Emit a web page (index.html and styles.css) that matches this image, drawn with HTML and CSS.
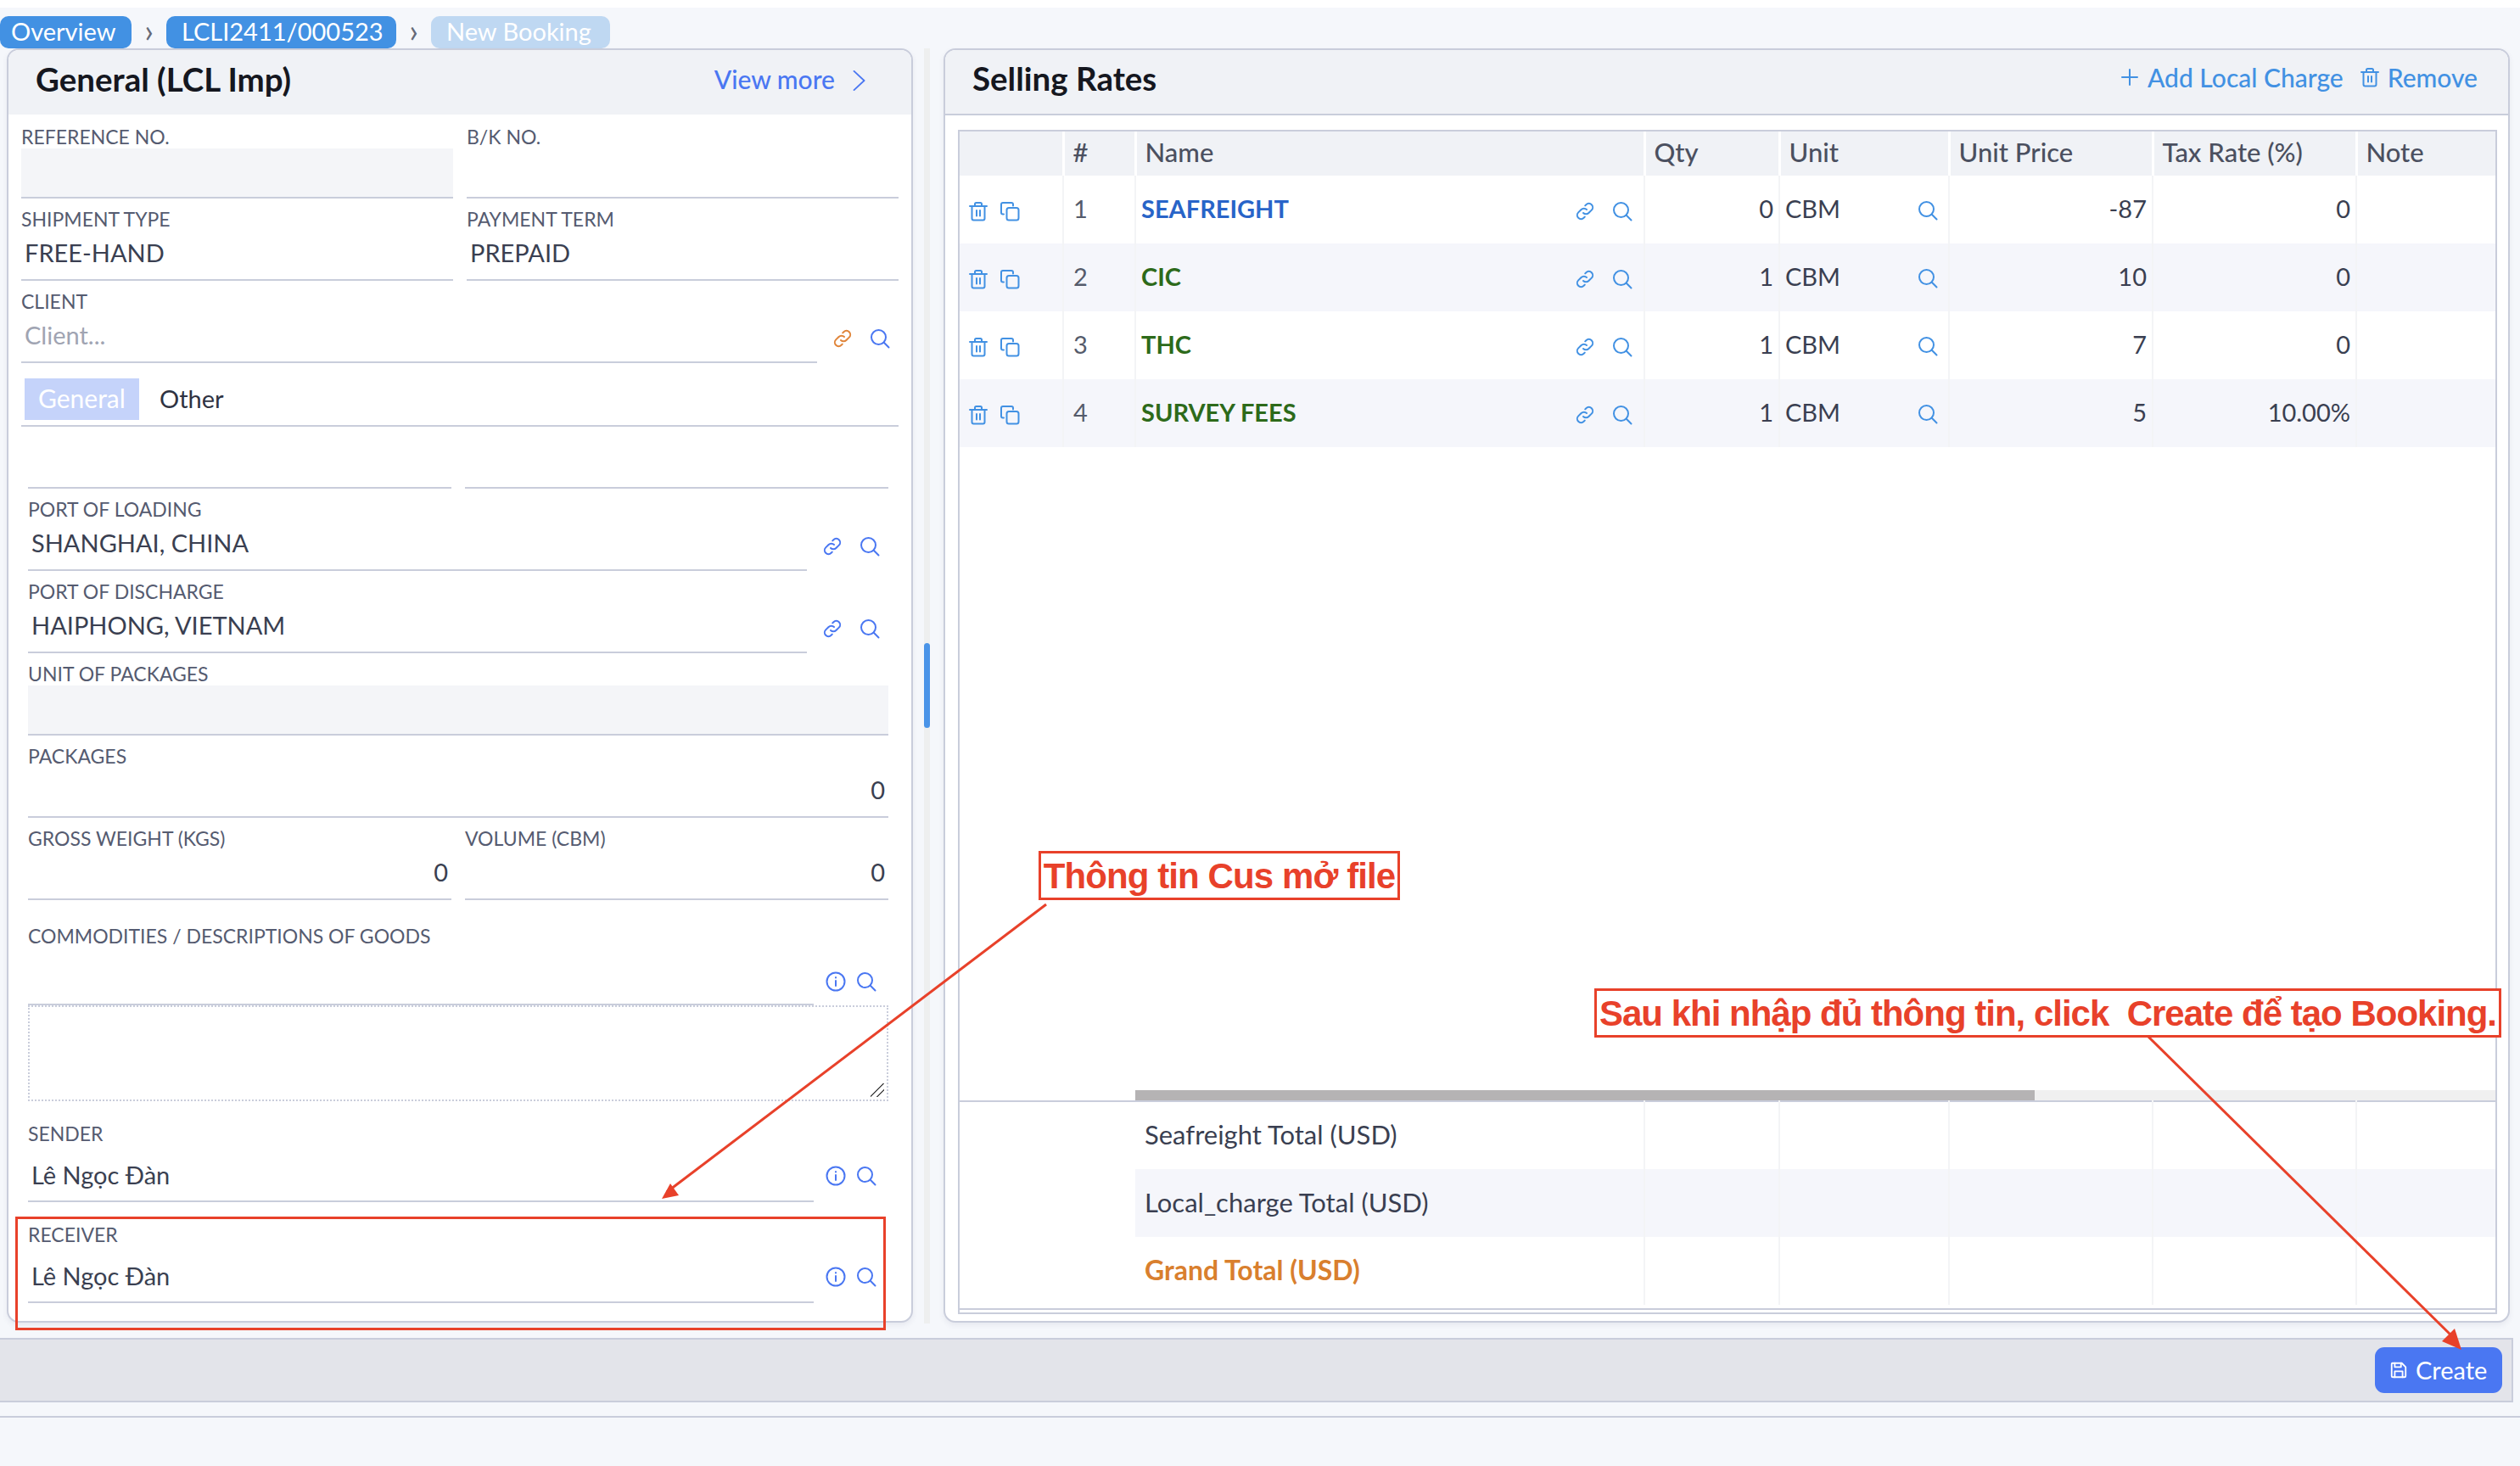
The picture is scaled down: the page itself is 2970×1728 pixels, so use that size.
FILE: index.html
```html
<!DOCTYPE html>
<html lang="en">
<head>
    <meta charset="UTF-8">
    <meta name="viewport" content="width=device-width, initial-scale=1.0">
    <title>New Booking</title>
    <link rel="stylesheet" href="styles.css">
</head>
<body>
    <svg class="icon-defs" width="0" height="0">
        <symbol id="i-search" viewBox="0 0 24 24"><circle cx="10.5" cy="10.5" r="8.5"/><path d="M16.8 16.8L22.5 22.5"/></symbol>
        <symbol id="i-link" viewBox="0 0 24 24"><path d="M10 14a4.5 4.5 0 0 0 6.4 0l3.4-3.4a4.5 4.5 0 0 0-6.4-6.4l-1.2 1.2"/><path d="M14 10a4.5 4.5 0 0 0-6.4 0l-3.4 3.4a4.5 4.5 0 0 0 6.4 6.4l1.2-1.2"/></symbol>
        <symbol id="i-info" viewBox="0 0 24 24"><circle cx="12" cy="12" r="10.5"/><path d="M12 11v6M12 7v.5"/></symbol>
        <symbol id="i-trash" viewBox="0 0 24 24"><path d="M2 6h20M8 6V3.500A1.500 1.500 0 0 1 9.500 2h5A1.500 1.500 0 0 1 16 3.500V6M4.500 6v14.500A2 2 0 0 0 6.500 22.500h11a2 2 0 0 0 2-2V6M10 11v6.500M14 11v6.500"/></symbol>
        <symbol id="i-copy" viewBox="0 0 24 24"><path d="M5 15.500H4a2 2 0 0 1-2-2V4a2 2 0 0 1 2-2h10a2 2 0 0 1 2 2v1.500"/><rect x="8.500" y="8" width="14" height="14.500" rx="2.500"/></symbol>
        <symbol id="i-plus" viewBox="0 0 24 24"><path d="M12 3v18M3 12h18"/></symbol>
        <symbol id="i-save" viewBox="0 0 24 24"><path d="M4 3h12l5 5v11.500a1.500 1.500 0 0 1-1.500 1.500h-15A1.500 1.500 0 0 1 3 19.500V4a1 1 0 0 1 1-1z"/><path d="M7 21v-7.500h10V21M7 3v5h8V3"/></symbol>
    </svg>

    <div class="top-strip"></div>

    <nav class="crumbs">
        <a class="crumb crumb-first">Overview</a>
        <span class="crumb-sep">&rsaquo;</span>
        <a class="crumb crumb-second">LCLI2411/000523</a>
        <span class="crumb-sep">&rsaquo;</span>
        <a class="crumb crumb-current">New Booking</a>
    </nav>

    <main class="content">
        <section class="card card-general">
            <header class="card-head">
                <h2>General (LCL Imp)</h2>
                <a class="view-more">View more <svg class="ico chevron" viewBox="0 0 26 26"><path d="M6 1L19 13L6 25"/></svg></a>
            </header>
            <div class="card-body">
                <div class="two-col">
                    <div class="field">
                        <label>REFERENCE NO.</label>
                        <div class="control is-disabled"></div>
                    </div>
                    <div class="field">
                        <label>B/K NO.</label>
                        <div class="control"></div>
                    </div>
                    <div class="field">
                        <label>SHIPMENT TYPE</label>
                        <div class="control">FREE-HAND</div>
                    </div>
                    <div class="field">
                        <label>PAYMENT TERM</label>
                        <div class="control">PREPAID</div>
                    </div>
                </div>
                <div class="field">
                    <label>CLIENT</label>
                    <div class="with-icons client-row">
                        <div class="control placeholder">Client...</div>
                        <svg class="ico ico-orange"><use href="#i-link"/></svg>
                        <svg class="ico"><use href="#i-search"/></svg>
                    </div>
                </div>

                <div class="tabs">
                    <span class="tab tab-active">General</span>
                    <span class="tab">Other</span>
                </div>

                <div class="tab-pane">
                    <div class="two-col clipped">
                        <div class="clip-line"></div>
                        <div class="clip-line"></div>
                    </div>
                    <div class="field">
                        <label>PORT OF LOADING</label>
                        <div class="with-icons port-row">
                            <div class="control">SHANGHAI, CHINA</div>
                            <svg class="ico"><use href="#i-link"/></svg>
                            <svg class="ico"><use href="#i-search"/></svg>
                        </div>
                    </div>
                    <div class="field">
                        <label>PORT OF DISCHARGE</label>
                        <div class="with-icons port-row">
                            <div class="control">HAIPHONG, VIETNAM</div>
                            <svg class="ico"><use href="#i-link"/></svg>
                            <svg class="ico"><use href="#i-search"/></svg>
                        </div>
                    </div>
                    <div class="field">
                        <label>UNIT OF PACKAGES</label>
                        <div class="control is-disabled"></div>
                    </div>
                    <div class="field">
                        <label>PACKAGES</label>
                        <div class="control is-number">0</div>
                    </div>
                    <div class="two-col">
                        <div class="field">
                            <label>GROSS WEIGHT (KGS)</label>
                            <div class="control is-number">0</div>
                        </div>
                        <div class="field">
                            <label>VOLUME (CBM)</label>
                            <div class="control is-number">0</div>
                        </div>
                    </div>

                    <div class="field commodity">
                        <label>COMMODITIES / DESCRIPTIONS OF GOODS</label>
                        <div class="with-icons party-row commodity-row">
                            <div class="control"></div>
                            <svg class="ico"><use href="#i-info"/></svg>
                            <svg class="ico"><use href="#i-search"/></svg>
                        </div>
                    </div>
                    <div class="text-area"><span class="resize-grip"></span></div>

                    <div class="field party">
                        <label>SENDER</label>
                        <div class="with-icons party-row">
                            <div class="control">Lê Ngọc Đàn</div>
                            <svg class="ico"><use href="#i-info"/></svg>
                            <svg class="ico"><use href="#i-search"/></svg>
                        </div>
                    </div>
                    <div class="field party">
                        <label>RECEIVER</label>
                        <div class="with-icons party-row">
                            <div class="control">Lê Ngọc Đàn</div>
                            <svg class="ico"><use href="#i-info"/></svg>
                            <svg class="ico"><use href="#i-search"/></svg>
                        </div>
                    </div>
                </div>
            </div>
        </section>

        <div class="page-scroll"><div class="page-thumb"></div></div>

        <section class="card card-rates">
            <header class="card-head">
                <h2>Selling Rates</h2>
                <div class="head-actions">
                    <a><svg class="ico ico-sky ico-plus"><use href="#i-plus"/></svg>Add Local Charge</a>
                    <a><svg class="ico ico-sky"><use href="#i-trash"/></svg>Remove</a>
                </div>
            </header>
            <div class="rates-body">
                <div class="grid-box">
                    <div class="grid-scroll">
                        <table class="grid">
                            <colgroup>
                                <col class="c-act"><col class="c-no"><col class="c-name"><col class="c-qty"><col class="c-unit"><col class="c-price"><col class="c-tax"><col>
                            </colgroup>
                            <thead>
                                <tr><th></th><th>#</th><th>Name</th><th>Qty</th><th>Unit</th><th>Unit Price</th><th>Tax Rate (%)</th><th>Note</th></tr>
                            </thead>
                            <tbody>
                                <tr>
                                    <td><div class="row-actions"><svg class="ico ico-sky"><use href="#i-trash"/></svg><svg class="ico ico-sky"><use href="#i-copy"/></svg></div></td>
                                    <td class="no">1</td>
                                    <td><div class="name-cell"><b class="charge-blue">SEAFREIGHT</b><svg class="ico ico-sky"><use href="#i-link"/></svg><svg class="ico ico-sky"><use href="#i-search"/></svg></div></td>
                                    <td class="num">0</td>
                                    <td><div class="unit-cell">CBM<svg class="ico ico-sky"><use href="#i-search"/></svg></div></td>
                                    <td class="num">-87</td>
                                    <td class="num">0</td>
                                    <td></td>
                                </tr>
                                <tr>
                                    <td><div class="row-actions"><svg class="ico ico-sky"><use href="#i-trash"/></svg><svg class="ico ico-sky"><use href="#i-copy"/></svg></div></td>
                                    <td class="no">2</td>
                                    <td><div class="name-cell"><b class="charge-green">CIC</b><svg class="ico ico-sky"><use href="#i-link"/></svg><svg class="ico ico-sky"><use href="#i-search"/></svg></div></td>
                                    <td class="num">1</td>
                                    <td><div class="unit-cell">CBM<svg class="ico ico-sky"><use href="#i-search"/></svg></div></td>
                                    <td class="num">10</td>
                                    <td class="num">0</td>
                                    <td></td>
                                </tr>
                                <tr>
                                    <td><div class="row-actions"><svg class="ico ico-sky"><use href="#i-trash"/></svg><svg class="ico ico-sky"><use href="#i-copy"/></svg></div></td>
                                    <td class="no">3</td>
                                    <td><div class="name-cell"><b class="charge-green">THC</b><svg class="ico ico-sky"><use href="#i-link"/></svg><svg class="ico ico-sky"><use href="#i-search"/></svg></div></td>
                                    <td class="num">1</td>
                                    <td><div class="unit-cell">CBM<svg class="ico ico-sky"><use href="#i-search"/></svg></div></td>
                                    <td class="num">7</td>
                                    <td class="num">0</td>
                                    <td></td>
                                </tr>
                                <tr>
                                    <td><div class="row-actions"><svg class="ico ico-sky"><use href="#i-trash"/></svg><svg class="ico ico-sky"><use href="#i-copy"/></svg></div></td>
                                    <td class="no">4</td>
                                    <td><div class="name-cell"><b class="charge-green">SURVEY FEES</b><svg class="ico ico-sky"><use href="#i-link"/></svg><svg class="ico ico-sky"><use href="#i-search"/></svg></div></td>
                                    <td class="num">1</td>
                                    <td><div class="unit-cell">CBM<svg class="ico ico-sky"><use href="#i-search"/></svg></div></td>
                                    <td class="num">5</td>
                                    <td class="num">10.00%</td>
                                    <td></td>
                                </tr>
                            </tbody>
                        </table>
                    </div>
                    <div class="h-scroll"><div class="h-thumb"></div></div>
                    <table class="grid totals">
                        <colgroup>
                            <col class="c-act"><col class="c-no"><col class="c-name"><col class="c-qty"><col class="c-unit"><col class="c-price"><col class="c-tax"><col>
                        </colgroup>
                        <tbody>
                            <tr><td class="blank"></td><td class="blank"></td><td class="label">Seafreight Total (USD)</td><td></td><td></td><td></td><td></td><td></td></tr>
                            <tr><td class="blank"></td><td class="blank"></td><td class="label">Local_charge Total (USD)</td><td></td><td></td><td></td><td></td><td></td></tr>
                            <tr><td class="blank"></td><td class="blank"></td><td class="label grand">Grand Total (USD)</td><td></td><td></td><td></td><td></td><td></td></tr>
                        </tbody>
                    </table>
                    <div class="grid-foot"></div>
                </div>
            </div>
        </section>
    </main>

    <footer class="action-bar">
        <button class="btn-create"><svg class="ico ico-white"><use href="#i-save"/></svg>Create</button>
    </footer>
    <div class="page-rule"></div>

    <!-- red notes drawn over the screenshot -->
    <div class="note note-cus">Thông tin Cus mở file</div>
    <div class="note note-create">Sau khi nhập đủ thông tin, click&nbsp; Create để tạo Booking.</div>
    <div class="note-frame"></div>
    <svg class="note-arrows" viewBox="0 0 2970 1728">
        <path d="M1233 1066L786 1405"/>
        <polygon points="780,1413 790,1395 800,1409"/>
        <path d="M2531 1221L2895 1580"/>
        <polygon points="2901,1591 2878,1581 2893,1566"/>
    </svg>
</body>
</html>
```

FILE: styles.css
```css
* {
    box-sizing: border-box;
}

body {
    margin: 0;
    height: 1728px;
    overflow: hidden;
    position: relative;
    background-color: #f5f7fb;
    color: #3a3f51;
    font-family: 'Lato', 'Noto Sans', sans-serif;
    font-size: 29px;
}

.icon-defs {
    position: absolute;
}

.top-strip {
    height: 9px;
    background-color: #fff;
}

/* breadcrumb */
.crumbs {
    display: flex;
    align-items: center;
    height: 38px;
    margin-top: 10px;
}

.crumb {
    display: flex;
    align-items: center;
    height: 38px;
    padding: 0 18px 3px;
    border-radius: 10px;
    color: #fff;
    font-size: 29px;
    background-color: #4291e3;
}

.crumb-first {
    width: 155px;
    padding-left: 13px;
}

.crumb-second {
    width: 271px;
}

.crumb-current {
    width: 211px;
    background-color: #bfd8f2;
}

.crumb-sep {
    width: 41px;
    padding-bottom: 7px;
    text-align: center;
    color: #666a78;
    font-size: 38px;
    line-height: 32px;
}

/* the two cards */
.content {
    display: flex;
    align-items: flex-start;
    height: 1503px;
    padding-left: 8px;
}

.card {
    border: 2px solid #c9cddb;
    border-radius: 14px;
    background-color: #fff;
    box-shadow: 0 3px 6px rgba(60, 70, 100, 0.08);
}

.card-general {
    flex: none;
    width: 1068px;
    height: 1502px;
}

.card-rates {
    flex: none;
    width: 1846px;
    height: 1502px;
}

.page-scroll {
    flex: none;
    width: 7px;
    height: 1503px;
    margin: 0 16px 0 13px;
    background-color: #eeefef;
}

.page-thumb {
    height: 100px;
    margin-top: 701px;
    border-radius: 4px;
    background-color: #4a94e8;
}

.card-head {
    display: flex;
    align-items: center;
    justify-content: space-between;
    height: 76px;
    padding-bottom: 8px;
    border-radius: 12px 12px 0 0;
    background-color: #f0f2f6;
}

.card-head h2 {
    margin: 0;
    color: #15171f;
    font-size: 38.5px;
    font-weight: 700;
}

.card-general .card-head {
    padding: 0 49px 8px 32px;
}

.view-more {
    display: flex;
    align-items: center;
    gap: 17px;
    color: #4a77f2;
    font-size: 30px;
    font-weight: 500;
}

.chevron {
    width: 26px;
    height: 26px;
    margin-top: 3px;
}

.card-body {
    padding: 12px 15px 0;
}

.two-col {
    display: grid;
    grid-template-columns: 1fr 1fr;
    column-gap: 16px;
}

.field {
    margin-bottom: 10px;
}

.field label {
    display: block;
    height: 28px;
    line-height: 28px;
    color: #555b70;
    font-size: 23px;
}

.control {
    height: 59px;
    padding: 0 4px 6px;
    display: flex;
    align-items: center;
    border-bottom: 2px solid #c9cddb;
}

.is-disabled {
    background-color: #f4f5f8;
}

.is-number {
    justify-content: flex-end;
}

.placeholder {
    color: #a0a4b2;
}

.with-icons {
    display: flex;
    align-items: center;
}

.with-icons .control {
    flex: none;
}

.ico {
    flex: none;
    width: 24px;
    height: 24px;
    fill: none;
    stroke: #4a77f2;
    stroke-width: 2;
    stroke-linecap: round;
    stroke-linejoin: round;
}

.ico-orange {
    stroke: #e0853a;
}

.ico-sky {
    stroke: #4291e3;
}

.ico-white {
    stroke: #fff;
}

.client-row .control {
    width: 938px;
    margin-right: 18px;
}

.client-row .ico + .ico {
    margin-left: 20px;
}

/* tabs */
.tabs {
    display: flex;
    align-items: flex-start;
    height: 57px;
    margin-top: 18px;
    padding-left: 4px;
    border-bottom: 2px solid #c9cddb;
}

.tab {
    display: flex;
    align-items: center;
    height: 49px;
    padding: 0 24px 3px;
    color: #2f3342;
    font-size: 29px;
}

.tab-active {
    width: 135px;
    padding: 0 16px 3px;
    color: #fff;
    font-size: 30px;
    background-color: #c5d3fa;
}

.tab-pane {
    padding: 0 12px 0 8px;
}

.clipped {
    height: 73px;
    margin-bottom: 10px;
}

.clip-line {
    border-bottom: 2px solid #c9cddb;
}

.port-row .control {
    width: 918px;
    margin-right: 18px;
}

.port-row .ico + .ico {
    margin-left: 20px;
}

.party-row .control {
    width: 926px;
    height: 67px;
    margin-right: 14px;
    padding-top: 4px;
    padding-bottom: 0;
}

.party-row .ico + .ico {
    margin-left: 12px;
}

.commodity {
    margin: 18px 0 0;
}

.commodity-row .control {
    height: 68px;
}

.commodity-row .ico {
    margin-top: 11px;
}

.text-area {
    display: flex;
    align-items: flex-end;
    justify-content: flex-end;
    height: 113px;
    padding: 3px;
    border: 2px dotted #c9cddb;
}

.resize-grip {
    width: 16px;
    height: 16px;
    background: linear-gradient(135deg, transparent 45%, #555 45%, #555 52%, transparent 52%, transparent 70%, #555 70%, #555 77%, transparent 77%);
}

.party {
    margin: 0;
}

.text-area + .party {
    margin-top: 24px;
}

.party + .party {
    margin-top: 24px;
}

.party .ico {
    margin-top: 4px;
}

/* selling rates */
.card-rates .card-head {
    height: 77px;
    padding: 0 36px 12px 32px;
    border-bottom: 2px solid #c9cddb;
}

.card-rates .card-head h2 {
    margin-top: 2px;
}

.head-actions {
    display: flex;
    align-items: center;
    gap: 19px;
    color: #4291e3;
    font-size: 30px;
    font-weight: 500;
}

.head-actions a {
    display: flex;
    align-items: center;
    gap: 9px;
}

.rates-body {
    padding: 17px 13px 0 15px;
}

.grid-box {
    height: 1396px;
    border: 2px solid #c9cddb;
}

.grid-scroll {
    height: 1130px;
}

.grid {
    width: 100%;
    table-layout: fixed;
    border-collapse: collapse;
}

.c-act {
    width: 122px;
}

.c-no {
    width: 85px;
}

.c-name {
    width: 600px;
}

.c-qty {
    width: 159px;
}

.c-unit {
    width: 200px;
}

.c-price {
    width: 240px;
}

.c-tax {
    width: 240px;
}

.grid th {
    height: 52px;
    padding: 0 0 4px 10px;
    text-align: left;
    color: #4b5060;
    font-size: 31px;
    font-weight: 500;
    border-right: 3px solid #fff;
    background-color: #f0f2f6;
}

.grid th:last-child,
.grid td:last-child {
    border-right: none;
}

.grid td {
    height: 80px;
    padding: 0 6px 3px;
    border-right: 2px solid #f3f4f6;
}

.grid tbody tr:nth-child(even) td {
    background-color: #f5f6fb;
}

.no {
    padding-left: 11px !important;
    color: #555b6b;
}

.num {
    text-align: right;
}

.row-actions {
    display: flex;
    align-items: center;
    gap: 13px;
    padding: 6px 0 0 4px;
}

.name-cell {
    display: flex;
    align-items: center;
    font-weight: 500;
}

.name-cell b {
    flex: 1;
    font-weight: 700;
    font-size: 29px;
}

.name-cell .ico {
    margin-top: 6px;
}

.name-cell .ico + .ico {
    margin: 6px 7px 0 20px;
}

.charge-blue {
    color: #2864c8;
}

.charge-green {
    color: #2d6a1a;
}

.unit-cell {
    display: flex;
    align-items: center;
    justify-content: space-between;
    padding-right: 6px;
}

.unit-cell .ico {
    margin-top: 4px;
}

.h-scroll {
    height: 12px;
    margin-left: 207px;
    background-color: #f0f0f0;
}

.h-thumb {
    width: 1060px;
    height: 12px;
    background-color: #b5b3b4;
}

.totals {
    border-top: 2px solid #c9cddb;
}

.totals td {
    height: 80px;
}

.totals .blank {
    background-color: #fff !important;
    border-right: none;
}

.totals .label {
    padding-left: 11px;
    font-size: 31px;
}

.totals .grand {
    color: #d97f2e;
    font-size: 32px;
    font-weight: 700;
}

.grid-foot {
    height: 2px;
    margin-top: 4px;
    background-color: #c9cddb;
}

/* bottom bar */
.action-bar {
    display: flex;
    align-items: center;
    justify-content: flex-end;
    width: 2962px;
    height: 76px;
    margin-top: 17px;
    padding-right: 11px;
    border: solid #c9cddb;
    border-width: 2px 2px 2px 0;
    background-color: #e3e4ea;
}

.btn-create {
    display: flex;
    align-items: center;
    gap: 9px;
    width: 150px;
    height: 54px;
    padding: 0 0 2px 17px;
    border: none;
    border-radius: 11px;
    color: #fff;
    font-family: inherit;
    font-size: 29px;
    background-color: #4a77f2;
}

.btn-create .ico {
    width: 22px;
    height: 22px;
    margin-top: 2px;
}

.page-rule {
    height: 2px;
    margin-top: 16px;
    background-color: #c9cddb;
}

/* annotations */
.note {
    position: absolute;
    display: flex;
    align-items: center;
    justify-content: center;
    padding-top: 2px;
    border: 3px solid #e8412a;
    color: #e8412a;
    font-family: 'Liberation Sans', Arial, sans-serif;
    font-size: 42px;
    font-weight: 700;
    white-space: nowrap;
    background-color: #fff;
}

.note-cus {
    left: 1224px;
    top: 1003px;
    width: 426px;
    height: 58px;
    letter-spacing: -0.9px;
}

.note-create {
    left: 1879px;
    top: 1165px;
    width: 1069px;
    height: 58px;
    letter-spacing: -1px;
}

.note-frame {
    position: absolute;
    left: 18px;
    top: 1434px;
    width: 1026px;
    height: 134px;
    border: 3px solid #e8412a;
}

.note-arrows {
    position: absolute;
    left: 0;
    top: 0;
    width: 2970px;
    height: 1728px;
    pointer-events: none;
}

.note-arrows path {
    fill: none;
    stroke: #e8412a;
    stroke-width: 3;
}

.note-arrows polygon {
    fill: #e8412a;
}
```
